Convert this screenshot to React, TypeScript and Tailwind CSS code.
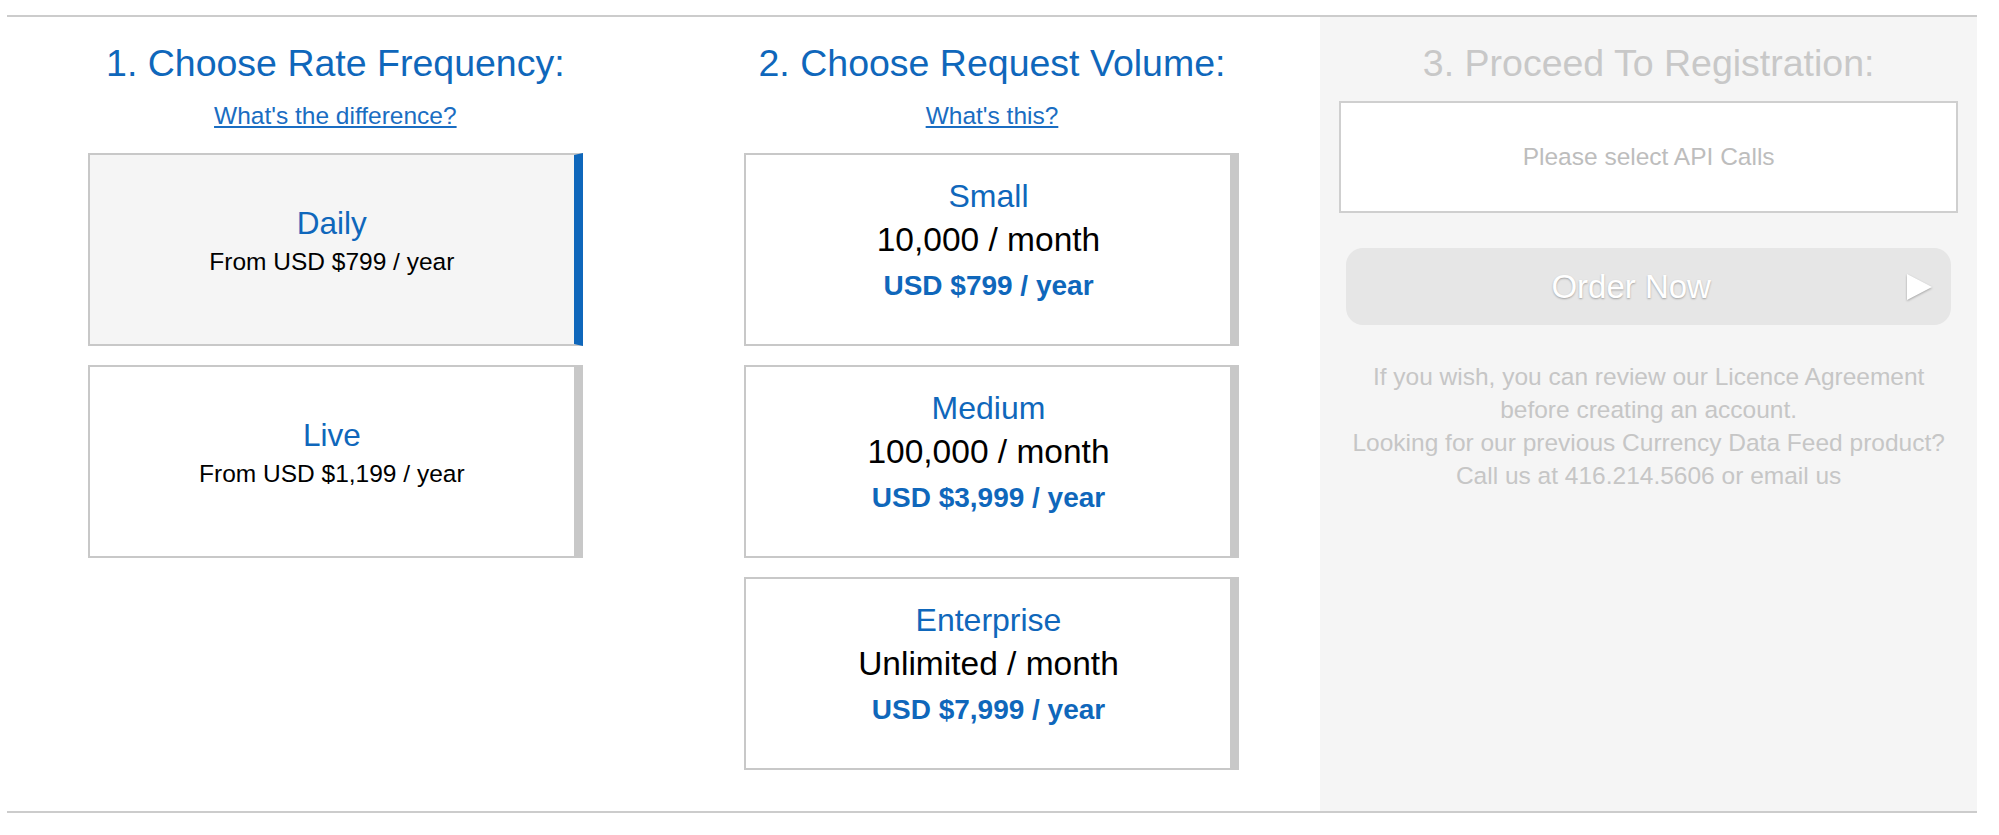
import React from "react";

const BLUE = "text-[#0f67bb]";

function FreqCard({ title, price, selected }: { title: string; price: string; selected?: boolean }) {
  return (
    <div
      className={
        selected
          ? "w-[495px] h-[193px] border-2 border-[#c8c8c8] border-r-[9px] border-r-[#0f67bb] bg-[#f5f5f5] flex flex-col items-center pt-[48px]"
          : "w-[495px] h-[193px] border-2 border-[#c8c8c8] border-r-[9px] bg-white flex flex-col items-center pt-[48px]"
      }
    >
      <div className="text-[31.5px] leading-[40px] text-[#0f67bb]">{title}</div>
      <div className="text-[24.5px] leading-[37px] text-black">{price}</div>
    </div>
  );
}

function VolumeCard({ title, volume, price }: { title: string; volume: string; price: string }) {
  return (
    <div className="w-[495px] h-[193px] border-2 border-[#c8c8c8] border-r-[9px] bg-white flex flex-col items-center pt-[19px]">
      <div className="text-[32px] leading-[44px] text-[#0f67bb]">{title}</div>
      <div className="text-[33.5px] leading-[44px] text-black">{volume}</div>
      <div className="text-[28px] leading-[47px] font-bold text-[#0f67bb]">{price}</div>
    </div>
  );
}

export default function App() {
  return (
    <div className="bg-white w-full h-[835px] font-['Liberation_Sans',Arial,Helvetica,sans-serif]">
      <div className="pt-[15px] ml-[7px] w-[1970px]">
        <div className="border-t-2 border-b-2 border-[#cccccc] grid grid-cols-3 h-[798px]">
          {/* Column 1 */}
          <div className="flex flex-col items-center pt-[24px]">
            <h2 className={`text-[37.5px] leading-[45px] ${BLUE}`}>1. Choose Rate Frequency:</h2>
            <a href="#" className="mt-[15px] text-[24.5px] leading-[30px] underline text-[#1a6dc2]">
              What's the difference?
            </a>
            <div className="mt-[22px] flex flex-col gap-[19px]">
              <FreqCard title="Daily" price="From USD $799 / year" selected />
              <FreqCard title="Live" price="From USD $1,199 / year" />
            </div>
          </div>

          {/* Column 2 */}
          <div className="flex flex-col items-center pt-[24px]">
            <h2 className={`text-[37.5px] leading-[45px] ${BLUE}`}>2. Choose Request Volume:</h2>
            <a href="#" className="mt-[15px] text-[24.5px] leading-[30px] underline text-[#1a6dc2]">
              What's this?
            </a>
            <div className="mt-[22px] flex flex-col gap-[19px]">
              <VolumeCard title="Small" volume="10,000 / month" price="USD $799 / year" />
              <VolumeCard title="Medium" volume="100,000 / month" price="USD $3,999 / year" />
              <VolumeCard title="Enterprise" volume="Unlimited / month" price="USD $7,999 / year" />
            </div>
          </div>

          {/* Column 3 */}
          <div className="bg-[#f5f5f5] flex flex-col items-center pt-[24px]">
            <h2 className="text-[37.5px] leading-[45px] text-[#c8c8c8]">3. Proceed To Registration:</h2>
            <div className="mt-[15px] w-[619px] h-[112px] border-2 border-[#cfcfcf] bg-white flex items-center justify-center text-[24.5px] text-[#bdbdbd]">
              Please select API Calls
            </div>
            <button className="relative mt-[35px] w-[605px] h-[77px] rounded-[17px] bg-[#e6e6e6] flex items-center justify-center pr-[35px] text-[33px] text-white [text-shadow:0_1px_2px_rgba(0,0,0,0.3)]">
              Order Now
              <svg
                className="absolute right-[19px] top-1/2 -translate-y-1/2 drop-shadow-[0_1px_1px_rgba(0,0,0,0.3)]"
                width="25"
                height="26"
                viewBox="0 0 25 26"
              >
                <polygon points="0,0 25,13 0,26" fill="#ffffff" />
              </svg>
            </button>
            <div className="mt-[35px] text-center text-[24.5px] leading-[33px] text-[#c6c6c6]">
              <p>
                If you wish, you can review our <a href="#">Licence Agreement</a>
                <br />
                before creating an account.
              </p>
              <p>
                Looking for our previous Currency Data Feed product?
                <br />
                Call us at 416.214.5606 or <a href="#">email us</a>
              </p>
            </div>
          </div>
        </div>
      </div>
    </div>
  );
}
